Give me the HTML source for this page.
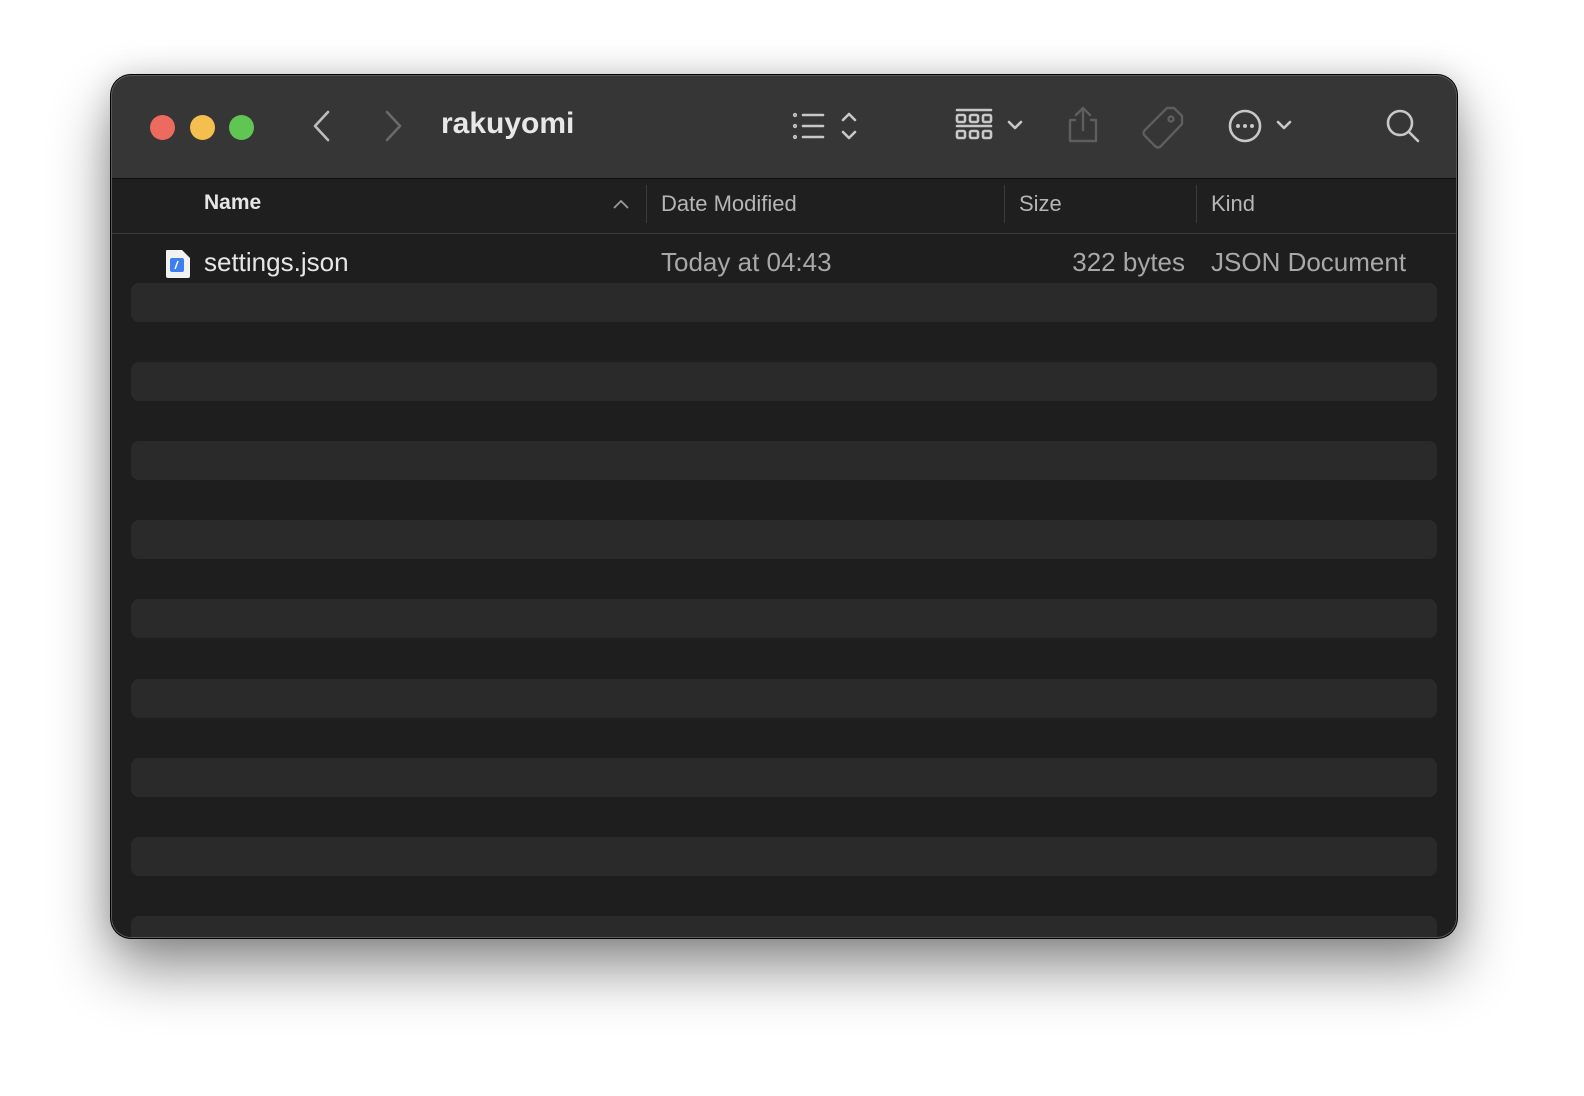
<!DOCTYPE html>
<html><head><meta charset="utf-8"><style>
html,body{margin:0;padding:0;width:1584px;height:1096px;background:#fff;overflow:hidden;font-family:"Liberation Sans",sans-serif}
.win{position:absolute;left:111px;top:75px;width:1346px;height:863px;border-radius:20px;background:#1e1e1e;overflow:hidden;box-shadow:0 0 0 1px #000,0 30px 60px rgba(0,0,0,.45),0 0 30px rgba(0,0,0,.15);}
.win:after{content:"";position:absolute;inset:0;border-radius:20px;box-shadow:inset 0 0 0 1px #5a5a5a;pointer-events:none}
.tb{position:absolute;left:0;top:0;width:100%;height:103px;background:#363636;border-bottom:1px solid #0c0c0c}
.dot{position:absolute;top:40px;width:25px;height:25px;border-radius:50%}
.hdr{position:absolute;top:104px;left:0;width:100%;height:54px;background:#1f1f1f;border-bottom:1px solid #3a3a3a}
.t{position:absolute;white-space:nowrap}
.sep{position:absolute;top:110px;width:1px;height:38px;background:#3a3a3a}
.stripe{position:absolute;left:20px;width:1306px;height:39px;background:#2a2a2a;border-radius:8px}
</style></head><body>
<div class="win">
<div class="tb"></div>
<div class="dot" style="left:39px;background:#ed6a5e"></div>
<div class="dot" style="left:79px;background:#f5bf4f"></div>
<div class="dot" style="left:118px;background:#61c554"></div>
<svg style="position:absolute;left:0;top:0" width="1346" height="103" fill="none" stroke-linecap="round" stroke-linejoin="round">
<path d="M217 37 L204 51 L217 65" stroke="#bdbdbd" stroke-width="2.6"/>
<path d="M276 37 L289 51 L276 65" stroke="#6a6a6a" stroke-width="2.6"/>
<g stroke="#c8c8c8" stroke-width="2.6">
<circle cx="684" cy="40" r=".8"/><circle cx="684" cy="51" r=".8"/><circle cx="684" cy="62" r=".8"/>
<path d="M692 40H712M692 51H712M692 62H712"/>
<path d="M732 45L738 39L744 45M732 57L738 63L744 57"/>
<path d="M846 35H880M846 51H880"/>
<rect x="846" y="40" width="8" height="7" rx="1.5"/><rect x="859" y="40" width="8" height="7" rx="1.5"/><rect x="872" y="40" width="8" height="7" rx="1.5"/>
<rect x="846" y="56" width="8" height="7" rx="1.5"/><rect x="859" y="56" width="8" height="7" rx="1.5"/><rect x="872" y="56" width="8" height="7" rx="1.5"/>
<path d="M898 47L904 53L910 47"/>
<circle cx="1134" cy="51" r="15"/>
<path d="M1167 47L1173 53L1179 47"/>
<circle cx="1289" cy="48" r="12"/><path d="M1298 57L1307 66"/>
</g>
<g fill="#c8c8c8"><circle cx="1127" cy="51" r="2"/><circle cx="1134" cy="51" r="2"/><circle cx="1141" cy="51" r="2"/></g>
<g stroke="#5e5e5e" stroke-width="2.4">
<path d="M964 45H959V66H985V45H980M972 55V33M965 40L972 33L979 40"/>
<path d="M1063 33H1056L1034 55Q1031 58 1034 61L1044 71Q1047 74 1050 71L1071 49V41Z"/>
<circle cx="1060" cy="44" r="2.5"/>
</g>
</svg>
<div class="t" style="left:330px;top:32px;font-size:30px;font-weight:bold;color:#e8e8e8">rakuyomi</div>
<div class="hdr"></div>
<div class="sep" style="left:535px"></div><div class="sep" style="left:893px"></div><div class="sep" style="left:1085px"></div>
<div class="t" style="left:93px;top:116px;font-size:21px;font-weight:bold;color:#e6e6e6">Name</div>
<svg style="position:absolute;left:500px;top:122px" width="20" height="14"><path d="M3 11L10 4L17 11" stroke="#9a9a9a" stroke-width="1.8" fill="none"/></svg>
<div class="t" style="left:550px;top:116px;font-size:22px;color:#b5b5b5">Date Modified</div>
<div class="t" style="left:908px;top:116px;font-size:22px;color:#b5b5b5">Size</div>
<div class="t" style="left:1100px;top:116px;font-size:22px;color:#b5b5b5">Kind</div>
<svg style="position:absolute;left:54px;top:174px" width="26" height="30"><path d="M1 2Q1 1 2 1H17L25 9V27Q25 29 23 29H3Q1 29 1 27Z" fill="#f2f2f2"/><rect x="5" y="9" width="14" height="14" rx="2" fill="#3d7ff0"/><path d="M13 12L10 20" stroke="#fff" stroke-width="1.5"/></svg>
<div class="t" style="left:93px;top:172px;font-size:26px;color:#e6e6e6">settings.json</div>
<div class="t" style="left:550px;top:172px;font-size:26px;color:#a8a8a8">Today at 04:43</div>
<div class="t" style="right:272px;top:172px;font-size:26px;color:#a8a8a8">322 bytes</div>
<div class="t" style="left:1100px;top:172px;font-size:26px;color:#a8a8a8">JSON Document</div>
<div class="stripe" style="top:208px"></div>
<div class="stripe" style="top:287px"></div>
<div class="stripe" style="top:366px"></div>
<div class="stripe" style="top:445px"></div>
<div class="stripe" style="top:524px"></div>
<div class="stripe" style="top:604px"></div>
<div class="stripe" style="top:683px"></div>
<div class="stripe" style="top:762px"></div>
<div class="stripe" style="top:841px"></div>
</div>
</body></html>
